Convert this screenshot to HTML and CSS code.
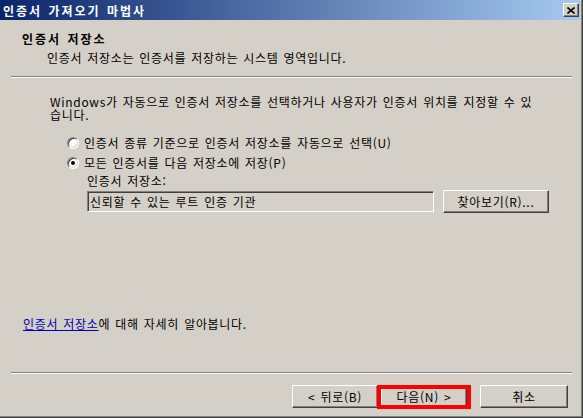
FILE: index.html
```html
<!DOCTYPE html>
<html lang="ko">
  <head>
    <meta charset="UTF-8">
    <title>인증서 가져오기 마법사</title>
    <link rel="stylesheet" href="styles.css">
  </head>
  <body>
  <div class="window">
    <div class="titlebar">
      <span class="title">인증서 가져오기 마법사</span>
      <span class="close-btn">
        <svg width="8" height="7" viewBox="0 0 8 7"><path d="M0.5 0.5L7.5 6.5M7.5 0.5L0.5 6.5" stroke="#000" stroke-width="1.6" fill="none"/></svg>
      </span>
    </div>

    <div class="header">
      <h1 class="header-title">인증서 저장소</h1>
      <p class="header-sub">인증서 저장소는 인증서를 저장하는 시스템 영역입니다.</p>
    </div>
    <div class="sep"></div>

    <div class="content">
      <p class="intro">Windows가 자동으로 인증서 저장소를 선택하거나 사용자가 인증서 위치를 지정할 수 있습니다.</p>
      <div class="options">
        <label class="option"><span class="radio"></span>인증서 종류 기준으로 인증서 저장소를 자동으로 선택(U)</label>
        <label class="option"><span class="radio checked"></span>모든 인증서를 다음 저장소에 저장(P)</label>
        <div class="store">
          <div class="store-label">인증서 저장소:</div>
          <div class="store-row">
            <div class="field">신뢰할 수 있는 루트 인증 기관</div>
            <button class="btn browse">찾아보기(R)...</button>
          </div>
        </div>
      </div>
      <p class="more"><a href="#">인증서 저장소</a>에 대해 자세히 알아봅니다.</p>
    </div>

    <div class="sep sep-bottom"></div>
    <div class="footer">
      <button class="btn back">&lt; 뒤로(B)</button>
      <button class="btn next">다음(N) &gt;</button>
      <button class="btn cancel">취소</button>
    </div>
  </div>
  </body>
</html>
```

FILE: styles.css
```css
* {
  box-sizing: border-box;
}

body {
  margin: 0;
  font-family: "Noto Sans CJK KR", "Liberation Sans", sans-serif;
  font-size: 12px;
  line-height: 13px;
  color: #000;
  letter-spacing: 0.7px;
  word-spacing: 1px;
}

/* window frame */
.window {
  width: 583px;
  height: 418px;
  background: #d4d0c8;
  border-right: 1px solid #404040;
  border-bottom: 1px solid #404040;
  box-shadow: inset -1px -1px #808080;
  padding: 0 2px 2px 0;
  display: flex;
  flex-direction: column;
}

.titlebar {
  flex: none;
  height: 20px;
  display: flex;
  align-items: center;
  justify-content: space-between;
  padding: 0 1px 0 3px;
  background: linear-gradient(to right, #0a246a, #a6caf0);
  color: #fff;
  font-weight: bold;
  letter-spacing: 2px;
}

.close-btn {
  width: 16px;
  height: 14px;
  display: flex;
  align-items: center;
  justify-content: center;
  background: #d4d0c8;
  border: 1px solid;
  border-color: #fff #404040 #404040 #fff;
  box-shadow: inset -1px -1px #808080;
}

/* header */
.header {
  flex: none;
  height: 56px;
  padding: 12px 0 0 22px;
}

.header-title {
  margin: 0;
  font-size: 12px;
  line-height: 13px;
  font-weight: bold;
  letter-spacing: 2px;
}

.header-sub {
  margin: 6px 0 0 25px;
}

.sep {
  flex: none;
  height: 2px;
  margin: 0 8px 0 11px;
  border-top: 1px solid #808080;
  border-bottom: 1px solid #fff;
}

/* main area */
.content {
  flex: 1;
  display: flex;
  flex-direction: column;
  padding: 17px 0 0 50px;
}

.intro {
  margin: 0;
  width: 485px;
}

.options {
  margin: 15px 0 0 17px;
}

.option {
  display: flex;
  align-items: center;
  height: 13px;
}

.option + .option {
  margin-top: 7px;
}

.radio {
  flex: none;
  position: relative;
  width: 12px;
  height: 12px;
  margin-right: 5px;
  border-radius: 50%;
  background: #fff;
  border: 1px solid;
  border-color: #808080 #fff #fff #808080;
  box-shadow: inset 1px 1px #404040, inset -1px -1px #d4d0c8;
}

.radio.checked::after {
  content: "";
  position: absolute;
  left: 3px;
  top: 3px;
  width: 4px;
  height: 4px;
  border-radius: 50%;
  background: #000;
}

.store {
  margin: 5px 0 0 20px;
}

.store-row {
  display: flex;
  align-items: center;
  margin-top: 3px;
}

.field {
  width: 347px;
  height: 21px;
  padding: 0 2px;
  line-height: 19px;
  background: #d4d0c8;
  border: 1px solid;
  border-color: #808080 #fff #fff #808080;
  box-shadow: inset 1px 1px #404040, inset -1px -1px #d4d0c8;
}

.btn {
  height: 23px;
  padding: 0;
  font: inherit;
  letter-spacing: 0.7px;
  word-spacing: 1px;
  color: #000;
  background: #d4d0c8;
  border: 1px solid;
  border-color: #fff #404040 #404040 #fff;
  box-shadow: inset -1px -1px #808080;
}

.browse {
  width: 106px;
  margin-left: 9px;
}

.more {
  margin: auto 0 42px -27px;
}

.more a {
  color: #0000b0;
}

/* buttons */
.footer {
  flex: none;
  height: 41px;
  display: flex;
  justify-content: flex-end;
  align-items: flex-start;
  padding: 11px 12px 0 0;
}

.back,
.next {
  width: 86px;
}

.next {
  position: relative;
  margin-left: 3px;
}

/* red highlight drawn over the default button */
.next::after {
  content: "";
  position: absolute;
  left: -5px;
  right: -5px;
  top: -1px;
  bottom: -2px;
  border: 4px solid #f00;
}

.cancel {
  width: 88px;
  margin-left: 13px;
}
```
